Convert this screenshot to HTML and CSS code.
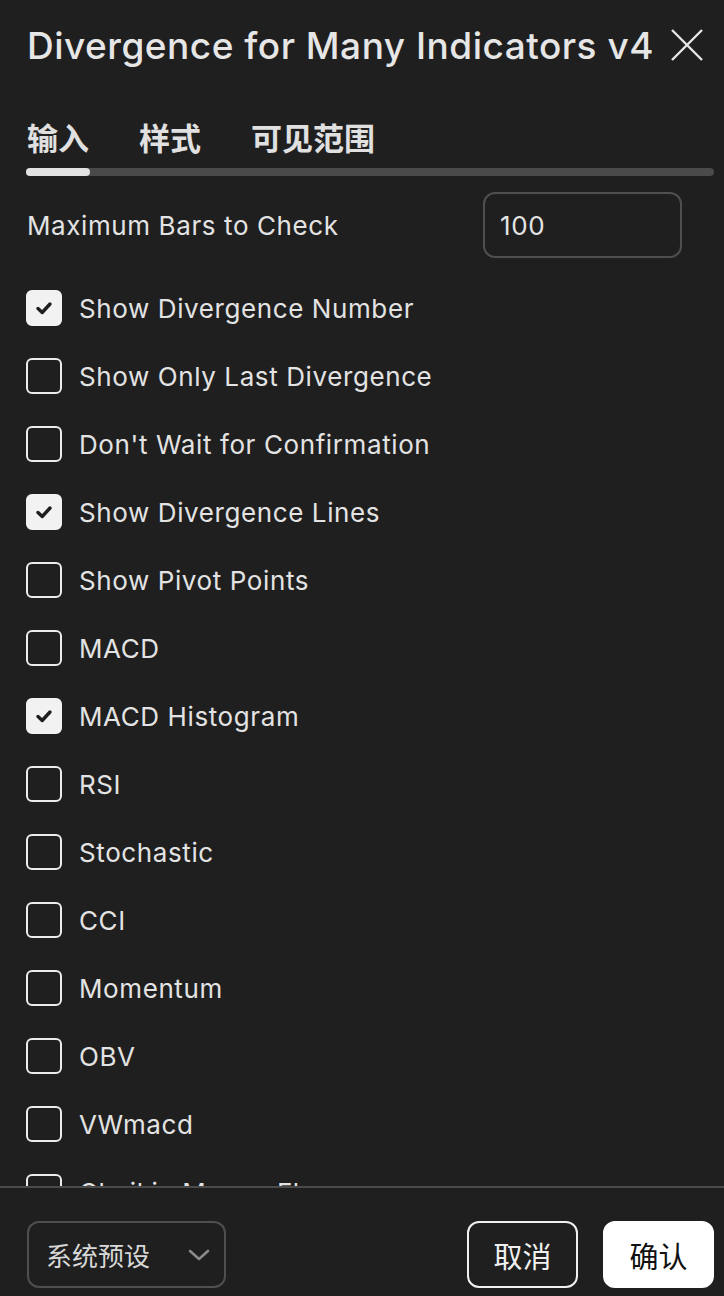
FILE: index.html
```html
<!DOCTYPE html>
<html lang="zh">
<head>
<meta charset="utf-8">
<link rel="stylesheet" href="styles.css">
</head>
<body>
<div class="dialog">
  <div class="main">
    <div class="header">
      <h1 class="title">Divergence for Many Indicators v4</h1>
      <svg class="close" width="34" height="34" viewBox="0 0 34 34"><path d="M2 2 L32 32 M32 2 L2 32" stroke="#e6e6e6" stroke-width="2.4" fill="none"/></svg>
    </div>
    <div class="tabs">
      <span class="tab active">输入</span>
      <span class="tab">样式</span>
      <span class="tab">可见范围</span>
    </div>
    <div class="track"><div class="thumb"></div></div>
    <div class="field">
      <span class="label">Maximum Bars to Check</span>
      <div class="input">100</div>
    </div>
    <ul class="list">
      <li class="row"><span class="box on"><svg width="20" height="20" viewBox="0 0 20 20"><path d="M4 10.5 L8.2 14.5 L16 6" stroke="#1f1f1f" stroke-width="3.4" fill="none" stroke-linecap="round" stroke-linejoin="round"/></svg></span><span class="text">Show Divergence Number</span></li>
      <li class="row"><span class="box"></span><span class="text">Show Only Last Divergence</span></li>
      <li class="row"><span class="box"></span><span class="text">Don't Wait for Confirmation</span></li>
      <li class="row"><span class="box on"><svg width="20" height="20" viewBox="0 0 20 20"><path d="M4 10.5 L8.2 14.5 L16 6" stroke="#1f1f1f" stroke-width="3.4" fill="none" stroke-linecap="round" stroke-linejoin="round"/></svg></span><span class="text">Show Divergence Lines</span></li>
      <li class="row"><span class="box"></span><span class="text">Show Pivot Points</span></li>
      <li class="row"><span class="box"></span><span class="text">MACD</span></li>
      <li class="row"><span class="box on"><svg width="20" height="20" viewBox="0 0 20 20"><path d="M4 10.5 L8.2 14.5 L16 6" stroke="#1f1f1f" stroke-width="3.4" fill="none" stroke-linecap="round" stroke-linejoin="round"/></svg></span><span class="text">MACD Histogram</span></li>
      <li class="row"><span class="box"></span><span class="text">RSI</span></li>
      <li class="row"><span class="box"></span><span class="text">Stochastic</span></li>
      <li class="row"><span class="box"></span><span class="text">CCI</span></li>
      <li class="row"><span class="box"></span><span class="text">Momentum</span></li>
      <li class="row"><span class="box"></span><span class="text">OBV</span></li>
      <li class="row"><span class="box"></span><span class="text">VWmacd</span></li>
      <li class="row"><span class="box"></span><span class="text">Chaikin Money Flow</span></li>
    </ul>
  </div>
  <div class="footer">
    <div class="select">
      <span>系统预设</span>
      <svg width="22" height="14" viewBox="0 0 22 14"><path d="M2 3 L11 11 L20 3" stroke="#8a8a8a" stroke-width="2.6" fill="none" stroke-linecap="round" stroke-linejoin="round"/></svg>
    </div>
    <div class="actions">
      <button class="btn cancel">取消</button>
      <button class="btn ok">确认</button>
    </div>
  </div>
</div>
</body>
</html>
```

FILE: styles.css
```css
* { box-sizing: border-box; }
html, body {
  margin: 0;
  padding: 0;
  background: #1f1f1f;
  color: #e3e3e3;
  font-family: Inter, "Noto Sans CJK SC", sans-serif;
}
.dialog {
  width: 724px;
  height: 1296px;
  display: flex;
  flex-direction: column;
}
.main {
  height: 1186px;
  overflow: hidden;
  padding: 0 10px 0 26px;
}
.header {
  height: 90px;
  display: flex;
  align-items: center;
  justify-content: space-between;
}
.title {
  margin: 0;
  font-size: 37px;
  font-weight: 500;
  color: #e6e6e6;
  letter-spacing: 0.5px;
  padding-left: 1px;
}
.close {
  margin-right: 10px;
}
.tabs {
  margin-top: 27px;
  height: 40px;
  display: flex;
  align-items: center;
  gap: 50px;
  padding-left: 1px;
}
.tab {
  font-family: "Noto Sans CJK SC", sans-serif;
  font-size: 31px;
  font-weight: 700;
  color: #e0e0e0;
  line-height: 40px;
}
.track {
  margin-top: 11px;
  height: 8px;
  border-radius: 4px;
  background: #4a4a4a;
}
.thumb {
  width: 64px;
  height: 8px;
  border-radius: 4px;
  background: #e2e2e2;
}
.field {
  margin-top: 16px;
  height: 66px;
  display: flex;
  align-items: center;
  justify-content: space-between;
  padding-right: 32px;
}
.label {
  font-size: 26px;
  letter-spacing: 0.6px;
  padding-left: 1px;
}
.input {
  width: 199px;
  height: 66px;
  border: 2px solid #4f4f4f;
  border-radius: 12px;
  display: flex;
  align-items: center;
  padding-left: 15px;
  font-size: 26px;
  letter-spacing: 0.6px;
}
.list {
  list-style: none;
  margin: 16px 0 0;
  padding: 0;
}
.row {
  height: 68px;
  display: flex;
  align-items: center;
}
.box {
  width: 36px;
  height: 36px;
  border: 2px solid #ececec;
  border-radius: 6px;
  display: flex;
  align-items: center;
  justify-content: center;
  flex: none;
}
.box.on {
  background: #f2f2f2;
  border-color: #f2f2f2;
}
.text {
  margin-left: 17px;
  font-size: 26px;
  letter-spacing: 0.6px;
  color: #e3e3e3;
}
.footer {
  border-top: 2px solid #4a4a4a;
  flex: 1;
  display: flex;
  justify-content: space-between;
  padding: 33px 10px 0 27px;
}
.select {
  width: 199px;
  height: 67px;
  border: 2px solid #4f4f4f;
  border-radius: 12px;
  display: flex;
  align-items: center;
  justify-content: space-between;
  padding: 0 14px 0 17px;
  font-family: "Noto Sans CJK SC", sans-serif;
  font-size: 26px;
  color: #d8d8d8;
}
.actions {
  display: flex;
  gap: 25px;
}
.btn {
  height: 67px;
  width: 111px;
  border-radius: 12px;
  font-family: "Noto Sans CJK SC", sans-serif;
  font-size: 29px;
  padding: 0;
}
.cancel {
  background: transparent;
  border: 2px solid #f0f0f0;
  color: #f0f0f0;
}
.ok {
  background: #ffffff;
  border: 2px solid #ffffff;
  color: #111111;
}
```
